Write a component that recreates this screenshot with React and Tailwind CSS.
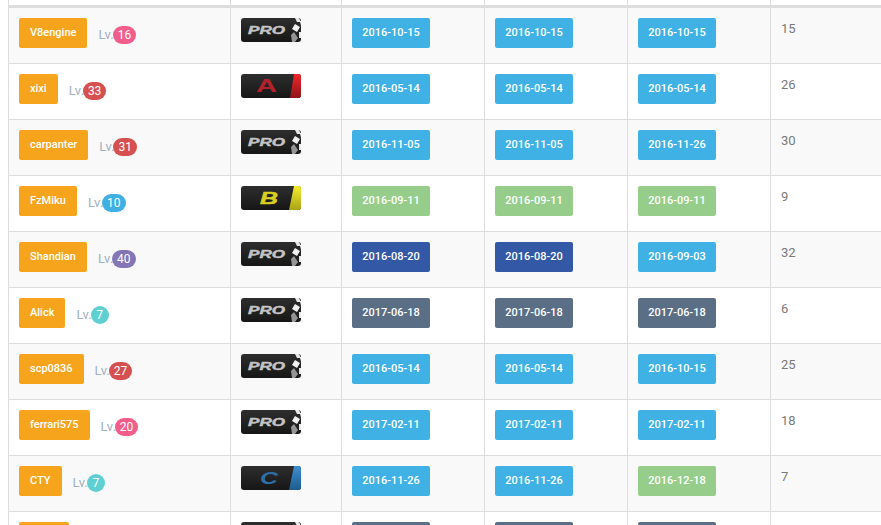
const rows = [
  { name: 'V8engine', lv: 16, lvColor: 'bg-[#f25e8c]', logo: 'pro', dates: [['2016-10-15', 'blue'], ['2016-10-15', 'blue'], ['2016-10-15', 'blue']], num: 15 },
  { name: 'xixi', lv: 33, lvColor: 'bg-[#d5504f]', logo: 'a', dates: [['2016-05-14', 'blue'], ['2016-05-14', 'blue'], ['2016-05-14', 'blue']], num: 26 },
  { name: 'carpanter', lv: 31, lvColor: 'bg-[#d5504f]', logo: 'pro', dates: [['2016-11-05', 'blue'], ['2016-11-05', 'blue'], ['2016-11-26', 'blue']], num: 30 },
  { name: 'FzMiku', lv: 10, lvColor: 'bg-[#40b0e4]', logo: 'b', dates: [['2016-09-11', 'green'], ['2016-09-11', 'green'], ['2016-09-11', 'green']], num: 9 },
  { name: 'Shandian', lv: 40, lvColor: 'bg-[#8375b6]', logo: 'pro', dates: [['2016-08-20', 'navy'], ['2016-08-20', 'navy'], ['2016-09-03', 'blue']], num: 32 },
  { name: 'Alick', lv: 7, lvColor: 'bg-[#5fcfd2]', logo: 'pro', dates: [['2017-06-18', 'slate'], ['2017-06-18', 'slate'], ['2017-06-18', 'slate']], num: 6 },
  { name: 'scp0836', lv: 27, lvColor: 'bg-[#d5504f]', logo: 'pro', dates: [['2016-05-14', 'blue'], ['2016-05-14', 'blue'], ['2016-10-15', 'blue']], num: 25 },
  { name: 'ferrari575', lv: 20, lvColor: 'bg-[#f25e8c]', logo: 'pro', dates: [['2017-02-11', 'blue'], ['2017-02-11', 'blue'], ['2017-02-11', 'blue']], num: 18 },
  { name: 'CTY', lv: 7, lvColor: 'bg-[#5fcfd2]', logo: 'c', dates: [['2016-11-26', 'blue'], ['2016-11-26', 'blue'], ['2016-12-18', 'green']], num: 7 },
  // cut off by the window: only the top edge of the tags shows
  { name: '', lv: null, lvColor: '', logo: 'blank', dates: [['', 'slate'], ['', 'slate'], ['', 'slate']], num: null },
]

const dateColors = {
  blue: 'bg-[#3fb1e5]',
  green: 'bg-[#96cd8b]',
  navy: 'bg-[#3358a6]',
  slate: 'bg-[#5a6e85]',
}

function RankLogo({ kind }) {
  const accent = { a: ['#f0262c', '#8f1518'], b: ['#f4ee2a', '#a9a318'], c: ['#3d8fd0', '#1d5c8e'] }[kind]
  const flag = kind === 'pro' || kind === 'blank'
  return (
    <svg width="60" height="24" viewBox="0 0 60 24" className="block">
      <defs>
        <linearGradient id={`bg-${kind}`} x1="0" y1="0" x2="0" y2="1">
          <stop offset="0" stopColor="#2e2e2e" />
          <stop offset="1" stopColor="#161616" />
        </linearGradient>
        {accent && (
          <linearGradient id={`ac-${kind}`} x1="0" y1="0" x2="0" y2="1">
            <stop offset="0" stopColor={accent[0]} />
            <stop offset="1" stopColor={accent[1]} />
          </linearGradient>
        )}
        <clipPath id={`clip-${kind}`}>
          <rect width="60" height="24" rx="3" />
        </clipPath>
      </defs>
      <g clipPath={`url(#clip-${kind})`}>
        <rect width="60" height="24" fill={`url(#bg-${kind})`} />
        {kind === 'pro' && (
          <text x="7" y="16" fontFamily="'Liberation Sans', sans-serif" fontSize="11" fontWeight="700" fontStyle="italic" fill="#c4c4c4" stroke="#c4c4c4" strokeWidth="0.4" textLength="37" lengthAdjust="spacingAndGlyphs">PRO</text>
        )}
        {flag && (
          <>
            <polygon points="54,0 58,0 60,4 56,4" fill="#e8e8e8" />
            <polygon points="54,6 59,9 56,14 51,11" fill="#f0f0f0" />
            <polygon points="59,3 60,3 60,8" fill="#ffffff" />
            <polygon points="50,17 53,14 57,20 54,24 51,24" fill="#949494" />
            <polygon points="58,14 60,14 60,20 58,20" fill="#e8e8e8" />
          </>
        )}
        {kind === 'a' && (
          <>
            <polygon points="53,0 60,0 60,24 49,24" fill="url(#ac-a)" />
            <text x="15" y="18" fontFamily="'Liberation Sans', sans-serif" fontSize="18" fontWeight="700" fill="#b5212a" textLength="21" lengthAdjust="spacingAndGlyphs">A</text>
          </>
        )}
        {kind === 'b' && (
          <>
            <polygon points="53,0 60,0 60,24 48,24" fill="url(#ac-b)" />
            <text x="19" y="18" fontFamily="'Liberation Sans', sans-serif" fontSize="17" fontWeight="700" fontStyle="italic" fill="#d9cf20" stroke="#d9cf20" strokeWidth="0.5" textLength="18" lengthAdjust="spacingAndGlyphs">B</text>
          </>
        )}
        {kind === 'c' && (
          <>
            <polygon points="53,0 60,0 60,24 48,24" fill="url(#ac-c)" />
            <text x="19" y="18" fontFamily="'Liberation Sans', sans-serif" fontSize="16" fontWeight="700" fontStyle="italic" fill="#2b70a8" textLength="18" lengthAdjust="spacingAndGlyphs">C</text>
          </>
        )}
      </g>
    </svg>
  )
}

function DateTag({ text, color }) {
  return (
    <span className={`flex h-[30px] w-[78px] items-center justify-center rounded-[2px] pt-[2px] text-[11px] font-medium text-white ${dateColors[color]}`}>
      {text}
    </span>
  )
}

export default function App() {
  return (
    <div className="h-[525px] w-[881px] overflow-hidden bg-white pl-2 font-['Roboto','Liberation_Sans',sans-serif]">
      <table className="w-[900px] table-fixed border-collapse">
        <colgroup>
          <col className="w-[222px]" />
          <col className="w-[111px]" />
          <col className="w-[143px]" />
          <col className="w-[143px]" />
          <col className="w-[143px]" />
          <col />
        </colgroup>
        <thead>
          <tr className="h-[6px]">
            {[0, 1, 2, 3, 4, 5].map((i) => (
              <th key={i} className="h-[6px] border-x border-b-[3px] border-x-[#dddddd] border-b-[#dddddd] p-0" />
            ))}
          </tr>
        </thead>
        <tbody>
          {rows.map((row, i) => (
            <tr key={i} className={i % 2 === 0 ? 'bg-[#f9f9f9]' : 'bg-white'}>
              <td className="h-[56px] border border-[#dddddd] px-[10px] pt-[10px] pb-[15px] align-top">
                <div className="flex items-start">
                  <span className={`flex h-[30px] items-center rounded-[2px] bg-[#f6a41c] px-[11px] pt-[1px] text-[11px] font-medium text-white ${row.name ? '' : 'w-[50px]'}`}>
                    {row.name}
                  </span>
                  {row.lv !== null && (
                    <span className="ml-[11px] flex items-center pt-[8px]">
                      <span className="text-[13px] leading-[18px] text-[#9fb1c2]">Lv.</span>
                      <span className={`-ml-px flex h-[18px] min-w-[18px] items-center justify-center rounded-full px-[5px] text-[12px] text-white ${row.lvColor}`}>
                        {row.lv}
                      </span>
                    </span>
                  )}
                </div>
              </td>
              <td className="border border-[#dddddd] px-[10px] pt-[10px] align-top">
                <RankLogo kind={row.logo} />
              </td>
              {row.dates.map(([text, color], d) => (
                <td key={d} className="border border-[#dddddd] px-[10px] pt-[10px] align-top">
                  <DateTag text={text} color={color} />
                </td>
              ))}
              <td className="border border-[#dddddd] px-[10px] pt-[11px] align-top text-[13px] leading-[20px] text-[#7a7a7a]">
                {row.num}
              </td>
            </tr>
          ))}
        </tbody>
      </table>
    </div>
  )
}
